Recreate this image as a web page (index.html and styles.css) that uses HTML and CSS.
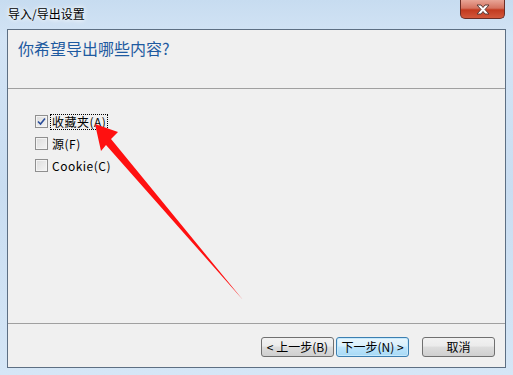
FILE: index.html
```html
<!DOCTYPE html>
<html>
<head>
<meta charset="utf-8">
<link rel="stylesheet" href="styles.css">
</head>
<body>
<div class="window">
  <div class="titlebar">
    <span class="title">导入/导出设置</span>
    <div class="close"><svg width="16" height="11" viewBox="0 0 16 11"><path d="M2 1 H6 L8 3.5 L10 1 H14 L10 5.5 L14 10 H10 L8 7.5 L6 10 H2 L6 5.5 Z" fill="#fff" stroke="#5a3a36" stroke-width="1"/></svg></div>
  </div>
  <div class="client">
    <div class="header">
      <h1 class="heading">你希望导出哪些内容?</h1>
    </div>
    <div class="body">
      <label class="opt"><span class="cb checked"><svg width="9" height="9" viewBox="0 0 9 9"><path d="M1 4.5 L3.5 7 L8 1.5" fill="none" stroke="#2a4d9a" stroke-width="1.6"/></svg></span><span class="lbl focus">收藏夹(A)</span></label>
      <label class="opt"><span class="cb"></span><span class="lbl">源(F)</span></label>
      <label class="opt"><span class="cb"></span><span class="lbl">Cookie(C)</span></label>
    </div>
    <div class="footer">
      <button class="btn">&lt; 上一步(B)</button>
      <button class="btn default">下一步(N) &gt;</button>
      <button class="btn cancel">取消</button>
    </div>
  </div>
  <svg class="arrow" width="513" height="375" viewBox="0 0 513 375">
    <path d="M95 124 L118 132 L111 139 L243 300 L106 145 L101 151 Z" fill="#ff1010"/>
  </svg>
</div>
</body>
</html>
```
FILE: styles.css
```css
html, body {
  margin: 0;
  padding: 0;
  width: 513px;
  height: 375px;
  overflow: hidden;
  font-family: "Noto Sans CJK SC", "DejaVu Sans", sans-serif;
}
.window {
  position: relative;
  width: 513px;
  height: 375px;
  box-sizing: border-box;
  padding: 0 7px 7px 7px;
  background: linear-gradient(180deg, #c7dcf0 0%, #d3e4f5 10%, #c9ddf1 50%, #d5e6f6 100%);
  display: flex;
  flex-direction: column;
}
.titlebar {
  height: 29px;
  flex: none;
  display: flex;
  justify-content: space-between;
  align-items: flex-start;
}
.title {
  font-size: 12px;
  color: #000;
  margin-top: 5px;
  margin-left: 1px;
  text-shadow: 0 0 6px #fff, 0 0 4px #fff;
}
.close {
  width: 45px;
  height: 19px;
  margin-right: 1px;
  box-sizing: border-box;
  border: 1px solid #6b2e26;
  border-top: none;
  border-radius: 0 0 5px 5px;
  background: linear-gradient(180deg, #e8a596 0%, #d57360 45%, #c23a1f 55%, #d2583c 100%);
  display: flex;
  align-items: center;
  justify-content: center;
}
.client {
  flex: 1;
  border: 1px solid #5d6f83;
  background: #f0f0f0;
  display: flex;
  flex-direction: column;
}
.header {
  height: 58px;
  flex: none;
  border-bottom: 1px solid #a0a0a0;
}
.heading {
  margin: 6px 0 0 10px;
  font-size: 16px;
  font-weight: normal;
  color: #1e5aa0;
}
.body {
  flex: 1;
  padding: 26px 0 0 27px;
  display: flex;
  flex-direction: column;
  gap: 9px;
}
.opt {
  display: flex;
  align-items: center;
  font-size: 12px;
  height: 13px;
}
.cb {
  width: 13px;
  height: 13px;
  box-sizing: border-box;
  border: 1px solid #8f8f8f;
  background: linear-gradient(135deg, #dcdcdc 0%, #f4f4f4 100%);
  box-shadow: inset 0 0 0 1px #f4f4f4;
  display: flex;
  align-items: center;
  justify-content: center;
  margin-right: 2px;
}
.lbl {
  padding: 0 1px;
  line-height: 14px;
  letter-spacing: 0.5px;
  border: 1px dotted transparent;
}
.lbl.focus {
  border-color: #000;
}
.footer {
  height: 44px;
  flex: none;
  box-sizing: border-box;
  border-top: 1px solid #a0a0a0;
  display: flex;
  align-items: flex-start;
  padding: 13px 0 0 253px;
}
.btn {
  width: 73px;
  height: 20px;
  box-sizing: border-box;
  border: 1px solid #707070;
  border-radius: 3px;
  background: linear-gradient(180deg, #f2f2f2 0%, #ebebeb 45%, #dddddd 50%, #cfcfcf 100%);
  font-family: "Noto Sans CJK SC", sans-serif;
  font-size: 12px;
  color: #000;
  padding: 0;
  line-height: 16px;
}
.btn.default {
  margin-left: 2px;
  border-color: #3c7fb1;
  background: linear-gradient(180deg, #eaf6fd 0%, #d9f0fc 45%, #bee6fd 50%, #a7d9f5 100%);
  box-shadow: inset 0 0 0 1px #c6e9fc;
}
.btn.cancel {
  margin-left: 13px;
}
.arrow {
  position: absolute;
  left: 0;
  top: 0;
  pointer-events: none;
}
```
